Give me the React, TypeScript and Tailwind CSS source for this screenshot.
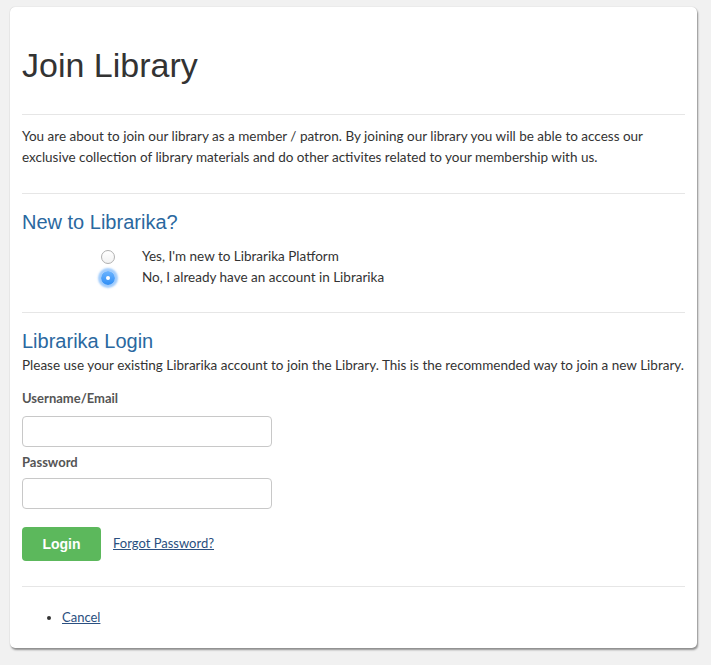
import React from "react";

const body = "font-['Lato','Liberation_Sans',sans-serif]";
const helv = "font-['Liberation_Sans','Arial',sans-serif]";

function Radio({ checked }: { checked?: boolean }) {
  if (checked) {
    return (
      <span className="flex h-[14px] w-[14px] items-center justify-center rounded-full bg-[linear-gradient(#6cb4ff,#2f8ef5)] shadow-[0_0_2px_3px_rgba(80,160,250,0.55)]">
        <span className="h-[4px] w-[4px] rounded-full bg-white" />
      </span>
    );
  }
  return (
    <span className="block h-[14px] w-[14px] rounded-full border border-[#b0b0b0] bg-[linear-gradient(#ffffff,#f2f2f2)]" />
  );
}

export default function App() {
  return (
    <div className={`min-h-[665px] bg-[#f1f1f1] pt-[7px] pl-[10px] ${body}`}>
      <div className="w-[687px] rounded-[5px] bg-white px-[12px] pb-[21px] pt-px shadow-[0_0_1px_rgba(0,0,0,0.25),1px_2px_2px_rgba(0,0,0,0.4)]">
        <h1 className={`mt-[37px] text-[34px] leading-[40px] text-[#333] ${helv}`}>Join Library</h1>
        <div className="mt-[29px] border-t border-[#e6e6e6]" />
        <p className="mt-[11px] text-[13.5px] leading-[21px] text-[#333]">
          You are about to join our library as a member / patron. By joining our library you will be able to access our exclusive collection of library materials and do other activites related to your membership with us.
        </p>
        <div className="mt-[25px] border-t border-[#e6e6e6]" />
        <h2 className={`mt-[16px] text-[20px] leading-[24px] text-[#2a68a0] ${helv}`}>New to Librarika?</h2>
        <div className="mt-[12px] flex flex-col text-[13.5px] leading-[21px] text-[#333]">
          <label className="flex items-center">
            <span className="ml-[79px] flex w-[14px] justify-center">
              <Radio />
            </span>
            <span className="ml-[27px]">Yes, I'm new to Librarika Platform</span>
          </label>
          <label className="flex items-center">
            <span className="ml-[79px] flex w-[14px] justify-center">
              <Radio checked />
            </span>
            <span className="ml-[27px]">No, I already have an account in Librarika</span>
          </label>
        </div>
        <div className="mt-[24px] border-t border-[#e6e6e6]" />
        <h2 className={`mt-[16px] text-[20px] leading-[24px] text-[#2a68a0] ${helv}`}>Librarika Login</h2>
        <p className="mt-[2px] text-[13.5px] leading-[20px] text-[#333]">
          Please use your existing Librarika account to join the Library. This is the recommended way to join a new Library.
        </p>
        <label className="mt-[13px] block text-[13px] font-bold leading-[20px] text-[#555]">Username/Email</label>
        <input className="mt-[8px] block h-[31px] w-[250px] rounded-[4px] border border-[#c8c8c8] bg-white px-2 text-[13px] outline-none" />
        <label className="mt-[5px] block text-[13px] font-bold leading-[20px] text-[#555]">Password</label>
        <input type="password" className="mt-[6px] block h-[31px] w-[250px] rounded-[4px] border border-[#c8c8c8] bg-white px-2 text-[13px] outline-none" />
        <div className="mt-[18px] flex items-center">
          <button className={`h-[34px] w-[79px] rounded-[4px] bg-[#5cb85c] text-[14px] font-bold text-white ${helv}`}>Login</button>
          <a href="#" className="ml-[12px] text-[13px] text-[#2a4f80] underline">Forgot Password?</a>
        </div>
        <div className="mt-[25px] border-t border-[#e6e6e6]" />
        <ul className="mt-[20px] list-disc pl-[40px] text-[13px] leading-[20px] text-[#333]">
          <li>
            <a href="#" className="text-[#2a4f80] underline">Cancel</a>
          </li>
        </ul>
      </div>
    </div>
  );
}
